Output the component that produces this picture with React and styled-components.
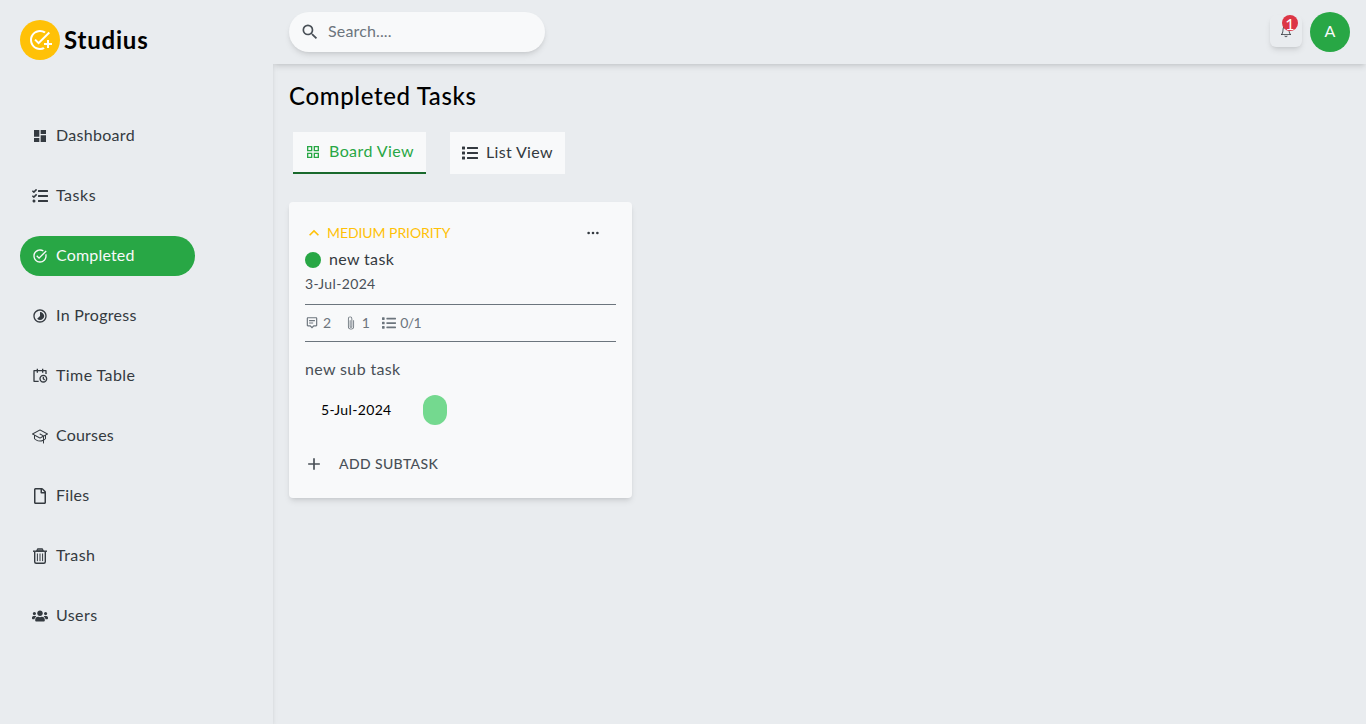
import React from "react";
import styled, { createGlobalStyle, css } from "styled-components";
import { MdDashboard, MdOutlineAddTask, MdTaskAlt, MdTimelapse, MdSearch, MdGridView, MdKeyboardArrowUp, MdAdd } from "react-icons/md";
import { FaTasks, FaList, FaUsers, FaRegFile } from "react-icons/fa";
import { PiGraduationCap } from "react-icons/pi";
import { RiCalendarScheduleLine } from "react-icons/ri";
import { IoIosNotificationsOutline } from "react-icons/io";
import { BsThreeDots, BsPaperclip } from "react-icons/bs";
import { BiMessageAltDetail } from "react-icons/bi";

const GlobalStyle = createGlobalStyle`
  *, *::before, *::after { box-sizing: border-box; }
  body {
    margin: 0;
    background: #e9ecef;
    color: #343a40;
    font: 400 16px/24px Lato, "Open Sans", sans-serif;
  }
  svg { display: block; flex: none; }
  h1, h2, h3, p, ul { margin: 0; padding: 0; }
  button { font: inherit; color: inherit; border: 0; padding: 0; background: none; }
`;

const mediumShadow = css`
  box-shadow: 0 4px 6px -1px rgba(0, 0, 0, 0.1), 0 2px 4px -2px rgba(0, 0, 0, 0.1);
`;

const Page = styled.div`
  display: flex;
  height: 724px;
  overflow: hidden;
`;

const Sidebar = styled.aside`
  flex: none;
  width: 273px;
  padding: 20px;
  ${mediumShadow}
`;

const Brand = styled.div`
  display: flex;
  align-items: center;
  gap: 4px;
  height: 40px;
`;

const BrandMark = styled.span`
  display: grid;
  place-items: center;
  width: 40px;
  height: 40px;
  border-radius: 50%;
  background: #ffc107;
  color: #fff;
  font-size: 24px;
`;

const BrandName = styled.h1`
  padding-bottom: 1px;
  color: #000;
  font-size: 24px;
  font-weight: 700;
  letter-spacing: 0.8px;
`;

const Nav = styled.ul`
  display: flex;
  flex-direction: column;
  gap: 20px;
  margin-top: 56px;
  list-style: none;
`;

const NavItem = styled.li`
  display: flex;
  align-items: center;
  gap: 8px;
  width: 175px;
  height: 40px;
  padding: 0 12px;
  border-radius: 20px;
  ${(p) => p.$active && css`
    background: #28a745;
    color: #f8f9fa;
  `}
`;

const Label = styled.span`
  padding-bottom: 2px;
  letter-spacing: ${(p) => p.$tracking || 0}px;
`;

const Column = styled.div`
  display: flex;
  flex-direction: column;
  flex: 1;
  overflow: hidden;
`;

const Header = styled.header`
  display: flex;
  flex: none;
  align-items: center;
  justify-content: space-between;
  height: 64px;
  padding: 0 16px;
  background: #e9ecef;
  ${mediumShadow}
`;

const SearchBox = styled.div`
  display: flex;
  align-items: center;
  gap: 8px;
  width: 256px;
  height: 40px;
  padding: 0 11px;
  border-radius: 20px;
  background: #f8f9fa;
  color: #6c757d;
  ${mediumShadow}

  svg {
    color: #495057;
    font-size: 20px;
  }
`;

const HeaderActions = styled.div`
  display: flex;
  align-items: center;
  gap: 8px;
`;

const BellButton = styled.button`
  position: relative;
  display: grid;
  place-items: center;
  width: 32px;
  height: 32px;
  margin-top: -2px;
  border-radius: 6px;
  color: #343a40;
  background: #e9ecef;
  ${mediumShadow}
`;

const Badge = styled.span`
  position: absolute;
  top: 0;
  left: 12px;
  width: 16px;
  height: 16px;
  border-radius: 50%;
  background: #dc3545;
  color: #fff;
  font-size: 16px;
  line-height: 17px;
  text-align: center;
`;

const Avatar = styled.span`
  display: grid;
  place-items: center;
  width: 40px;
  height: 40px;
  border-radius: 50%;
  background: #28a745;
  color: #f8f9fa;
`;

const Main = styled.main`
  padding: 16px;
`;

const PageTitle = styled.h2`
  color: #000;
  font-size: 24px;
  font-weight: 500;
  line-height: 32px;
  letter-spacing: 0.64px;
`;

const Tabs = styled.div`
  display: flex;
  gap: 24px;
  margin: 20px 4px 28px;
`;

const Tab = styled.button`
  display: flex;
  align-items: center;
  gap: 8px;
  height: 42px;
  padding: 0 12px;
  background: #f8f9fa;
  color: ${(p) => (p.$selected ? "#28a745" : "#343a40")};
  border-bottom: ${(p) => (p.$selected ? "2px solid #19692c" : "0")};
`;

const Card = styled.article`
  width: 343px;
  height: 296px;
  padding: 16px;
  border-radius: 4px;
  background: #f8f9fa;
  ${mediumShadow}
`;

const CardTop = styled.div`
  display: flex;
  align-items: center;
  justify-content: space-between;
  height: 30px;
  padding-right: 16px;
  font-size: 14px;
`;

const Priority = styled.div`
  display: flex;
  align-items: center;
  gap: 3px;
  margin-left: -1px;
  color: #ffc107;
  letter-spacing: -0.07px;

  svg { font-size: 20px; }
`;

const MoreButton = styled.button`
  color: #343a40;
`;

const TitleRow = styled.div`
  display: flex;
  align-items: center;
  gap: 8px;
  height: 24px;
`;

const StageDot = styled.span`
  width: 16px;
  height: 16px;
  border-radius: 50%;
  background: #28a745;
`;

const CardDate = styled.p`
  color: #495057;
  font-size: 14px;
  letter-spacing: 0.35px;
`;

const Stats = styled.div`
  display: flex;
  align-items: center;
  gap: 12.5px;
  height: 38px;
  margin-top: 8px;
  border: solid #6c757d;
  border-width: 1px 0;
  color: #6c757d;
  font-size: 14px;
`;

const Stat = styled.span`
  display: flex;
  align-items: center;
  gap: 4px;
  letter-spacing: ${(p) => p.$tracking || 0}px;
`;

const SubtaskName = styled.h3`
  margin-top: 15px;
  color: #495057;
  font-size: 16px;
  font-weight: 400;
  letter-spacing: 0.36px;
`;

const SubtaskInfo = styled.div`
  display: flex;
  align-items: center;
  gap: 32px;
  height: 30px;
  margin-top: 14px;
  padding-left: 16px;
  color: #000;
  font-size: 14px;
`;

const SubtaskDate = styled.span`
  width: 70px;
  letter-spacing: 0.35px;
  white-space: nowrap;
`;

const SubtaskTag = styled.span`
  width: 24px;
  height: 30px;
  border-radius: 12px;
  background: #74d98f;
`;

const AddButton = styled.button`
  display: flex;
  align-items: center;
  gap: 15px;
  height: 40px;
  margin: 19px 0 0 -1px;
  color: #495057;
  font-size: 14px;
  font-weight: 500;
  letter-spacing: 0.38px;

  svg { font-size: 20px; }
`;

function TrashIcon() {
  return (
    <svg width="16" height="16" viewBox="0 0 16 16" fill="none" stroke="currentColor">
      <path d="M4.7 3 5.6.9h4.8L11.3 3z" fill="currentColor" fillOpacity="0.5" strokeWidth="1.1" strokeLinejoin="round" />
      <path d="M1 3.2h14" strokeWidth="1.4" />
      <path d="M2.7 3.5v10.3q0 1.5 1.5 1.5h7.6q1.5 0 1.5-1.5V3.5" strokeWidth="1.4" />
      <path d="M5.4 5.5v7.6M8 5.5v7.6M10.6 5.5v7.6" strokeWidth="1" />
    </svg>
  );
}

const navItems = [
  { name: "Dashboard", Icon: MdDashboard, tracking: 0.3 },
  { name: "Tasks", Icon: FaTasks, tracking: 0.5 },
  { name: "Completed", Icon: MdTaskAlt, tracking: 0.18, active: true },
  { name: "In Progress", Icon: MdTimelapse, tracking: 0.3 },
  { name: "Time Table", Icon: RiCalendarScheduleLine, tracking: 0.42 },
  { name: "Courses", Icon: PiGraduationCap, tracking: 0.2 },
  { name: "Files", Icon: FaRegFile, tracking: 0.3 },
  { name: "Trash", Icon: TrashIcon, tracking: 0.45 },
  { name: "Users", Icon: FaUsers, tracking: 0.4 },
];

export default function App() {
  return (
    <>
      <GlobalStyle />
      <Page>
        <Sidebar>
          <Brand>
            <BrandMark><MdOutlineAddTask /></BrandMark>
            <BrandName>Studius</BrandName>
          </Brand>
          <Nav>
            {navItems.map(({ name, Icon, tracking, active }) => (
              <NavItem key={name} $active={active}>
                <Icon />
                <Label $tracking={tracking}>{name}</Label>
              </NavItem>
            ))}
          </Nav>
        </Sidebar>
        <Column>
          <Header>
            <SearchBox>
              <MdSearch />
              <Label $tracking={0.15}>Search....</Label>
            </SearchBox>
            <HeaderActions>
              <BellButton aria-label="Notifications">
                <IoIosNotificationsOutline />
                <Badge>1</Badge>
              </BellButton>
              <Avatar><Label>A</Label></Avatar>
            </HeaderActions>
          </Header>
          <Main>
            <PageTitle>Completed Tasks</PageTitle>
            <Tabs>
              <Tab $selected>
                <MdGridView />
                <Label $tracking={0.41}>Board View</Label>
              </Tab>
              <Tab>
                <FaList />
                <Label $tracking={0.34}>List View</Label>
              </Tab>
            </Tabs>
            <Card>
              <CardTop>
                <Priority>
                  <MdKeyboardArrowUp />
                  <span>MEDIUM PRIORITY</span>
                </Priority>
                <MoreButton aria-label="More"><BsThreeDots /></MoreButton>
              </CardTop>
              <TitleRow>
                <StageDot />
                <Label $tracking={0.35}>new task</Label>
              </TitleRow>
              <CardDate>3-Jul-2024</CardDate>
              <Stats>
                <Stat><BiMessageAltDetail />2</Stat>
                <Stat><BsPaperclip />1</Stat>
                <Stat $tracking={-0.6}><FaList />0/1</Stat>
              </Stats>
              <SubtaskName>new sub task</SubtaskName>
              <SubtaskInfo>
                <SubtaskDate>5-Jul-2024</SubtaskDate>
                <SubtaskTag />
              </SubtaskInfo>
              <AddButton>
                <MdAdd />
                <span>ADD SUBTASK</span>
              </AddButton>
            </Card>
          </Main>
        </Column>
      </Page>
    </>
  );
}
